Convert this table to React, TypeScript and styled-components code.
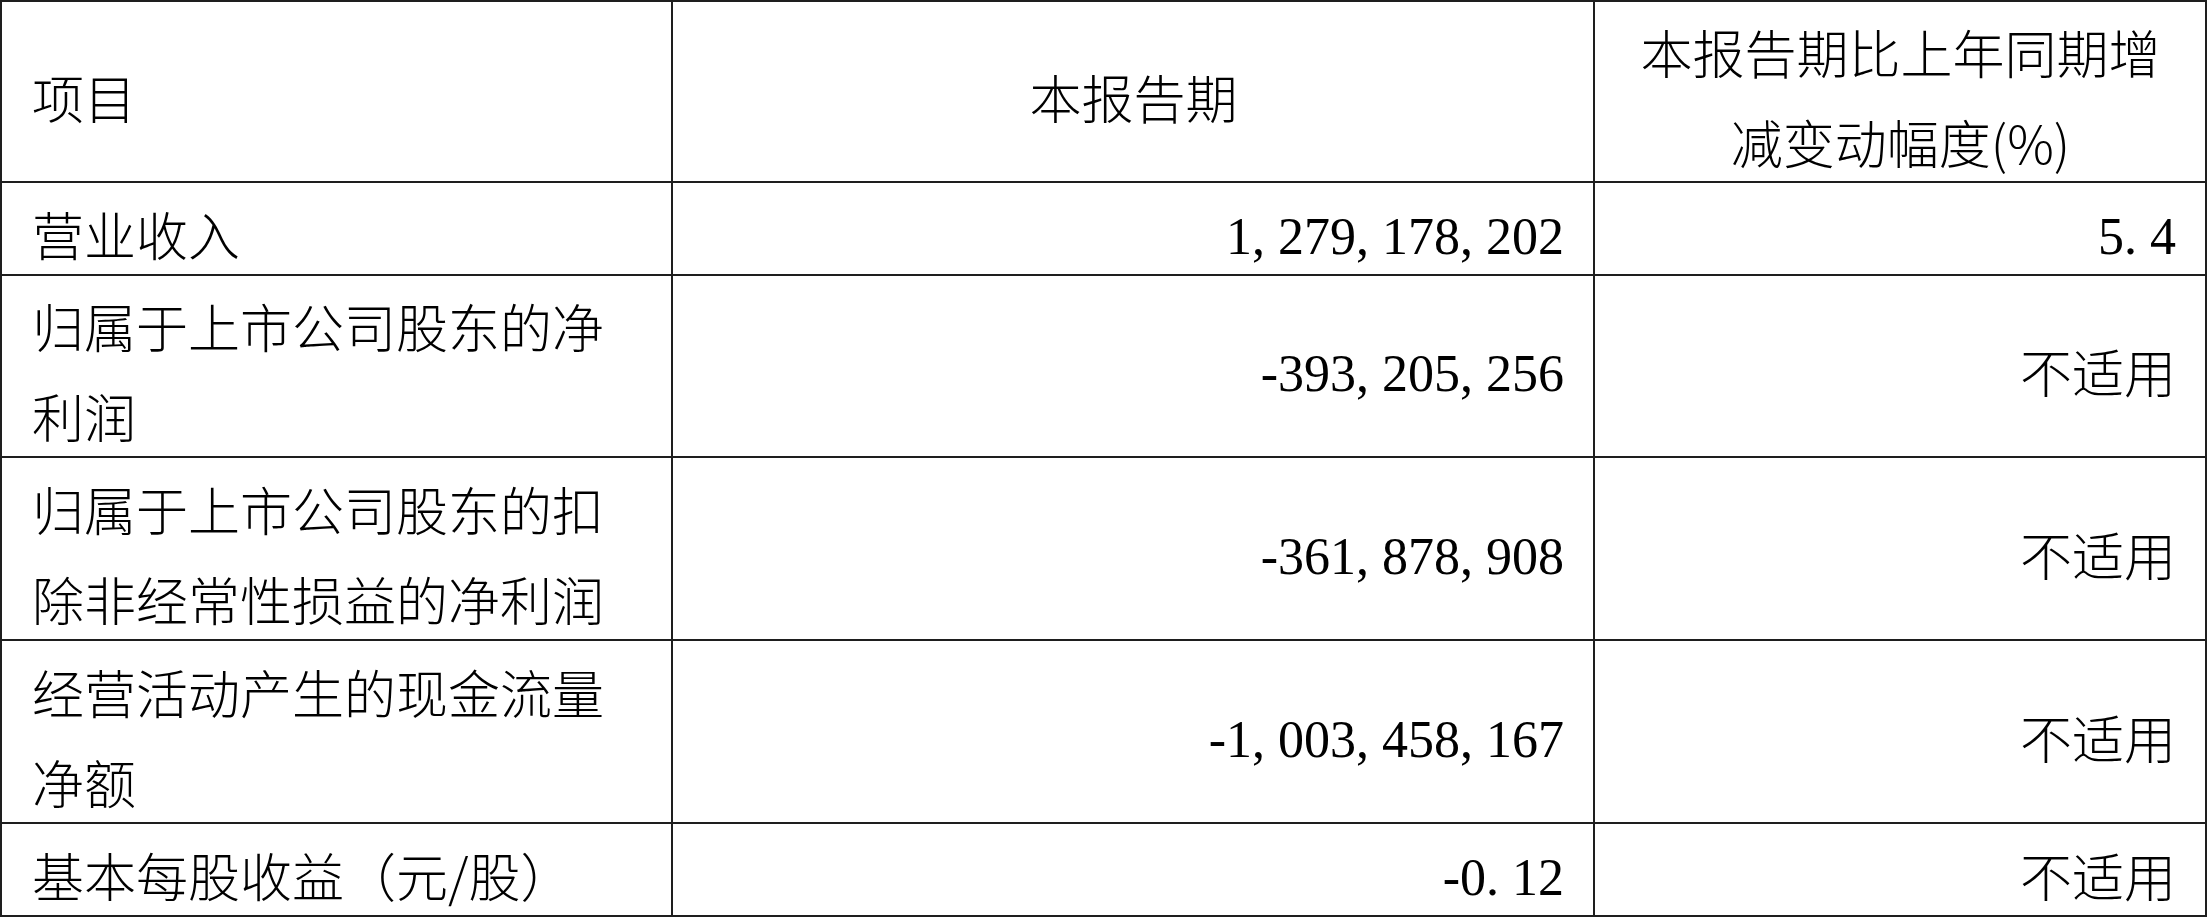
import React from 'react';
import styled, { createGlobalStyle } from 'styled-components';

const GlobalStyle = createGlobalStyle`
  html, body {
    margin: 0;
    padding: 0;
    background: #ffffff;
  }
  body {
    font-family: "Noto Sans CJK SC", "Noto Sans", sans-serif;
    color: #000000;
  }
`;

// Tabla de indicadores
const Table = styled.div`
  display: grid;
  grid-template-columns: 671px 922px 612px;
  grid-template-rows: 181px 93px 182px 183px 183px 93px;
  width: 2207px;
  box-sizing: border-box;
  border-top: 2px solid #1e1e1e;
  border-left: 2px solid #1e1e1e;
`;

const Cell = styled.div<{ $align?: 'left' | 'center' | 'right'; $num?: boolean }>`
  box-sizing: border-box;
  border-right: 2px solid #1e1e1e;
  border-bottom: 2px solid #1e1e1e;
  display: flex;
  align-items: center;
  justify-content: ${({ $align }) =>
    $align === 'right' ? 'flex-end' : $align === 'center' ? 'center' : 'flex-start'};
  text-align: ${({ $align }) => $align || 'left'};
  padding: ${({ $num }) => ($num ? '16px 29px 0 30px' : '10px 29px 0 30px')};
  font-family: ${({ $num }) =>
    $num
      ? '"Liberation Serif", "Times New Roman", serif'
      : '"Noto Sans CJK SC", "Noto Sans", sans-serif'};
  font-size: 52px;
  font-weight: 300;
  line-height: 90px;
  white-space: ${({ $num }) => ($num ? 'nowrap' : 'normal')};
  word-break: break-all;
`;

const Text = styled.span``;

type Row = { label: string; value: string; change: string; tall?: boolean };

const rows: Row[] = [
  { label: '营业收入', value: '1, 279, 178, 202', change: '5. 4' },
  { label: '归属于上市公司股东的净利润', value: '-393, 205, 256', change: '不适用' },
  { label: '归属于上市公司股东的扣除非经常性损益的净利润', value: '-361, 878, 908', change: '不适用' },
  { label: '经营活动产生的现金流量净额', value: '-1, 003, 458, 167', change: '不适用' },
  { label: '基本每股收益（元/股）', value: '-0. 12', change: '不适用' },
];

const isNumeric = (s: string) => /^[-\d., ]+$/.test(s);

const App: React.FC = () => {
  return (
    <>
      <GlobalStyle />
      <Table>
        <Cell>
          <Text>项目</Text>
        </Cell>
        <Cell $align="center">
          <Text>本报告期</Text>
        </Cell>
        <Cell $align="center">
          <Text>
            本报告期比上年同期增
            <br />
            减变动幅度(%)
          </Text>
        </Cell>
        {rows.map((r) => (
          <React.Fragment key={r.label}>
            <Cell>
              <Text>{r.label}</Text>
            </Cell>
            <Cell $align="right" $num>
              <Text>{r.value}</Text>
            </Cell>
            <Cell $align="right" $num={isNumeric(r.change)}>
              <Text>{r.change}</Text>
            </Cell>
          </React.Fragment>
        ))}
      </Table>
    </>
  );
};

export default App;
